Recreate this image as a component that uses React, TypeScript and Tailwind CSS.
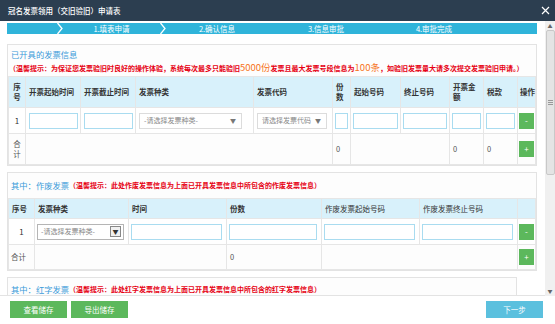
import React from 'react';

const cell = 'border border-[#e6e6e6] align-middle';
const inputCls = 'block h-[16px] w-full border border-[#a9dcf0] bg-white';

const GreenBtn = ({ label }: { label: string }) => (
  <div className="mx-auto flex h-[16px] w-[15px] items-center justify-center bg-[#5cb85c] text-[8px] leading-none text-white">
    {label}
  </div>
);

const FakeSelect = ({ text }: { text: string }) => (
  <div className="flex h-[16px] w-full items-center justify-between border border-[#dcdcdc] bg-white pl-[4px] pr-[5px]">
    <span className="text-[7px] text-[#888]">{text}</span>
    <span className="text-[6px] text-[#777]">▼</span>
  </div>
);

const WinSelect = ({ text }: { text: string }) => (
  <div className="flex h-[16px] w-full items-center justify-between border border-[#b5b5b5] bg-white pl-[3px] pr-[2px]">
    <span className="text-[7px] text-[#888]">{text}</span>
    <span className="flex h-[11px] w-[11px] items-center justify-center border border-[#888] bg-[#f0f0f0] text-[6px] text-[#333]">▼</span>
  </div>
);

const Hint = ({ children }: { children: React.ReactNode }) => (
  <span className="whitespace-nowrap text-[7px] font-bold text-[#e60012]">{children}</span>
);

const Chevron = () => (
  <svg className="absolute -left-[3px] top-0" width="6" height="11" viewBox="0 0 6 11">
    <polyline points="0.5,0 5,5.5 0.5,11" fill="none" stroke="#ffffff" strokeWidth="1.3" />
  </svg>
);

const App = () => {
  return (
    <div className="relative h-[324px] w-[555px] overflow-hidden bg-white font-['Noto_Sans_CJK_SC',sans-serif] text-[#333]">
      {/* title bar */}
      <div className="flex h-[21px] items-center justify-between bg-[#2c3e50] pl-[8px] pr-[5px]">
        <span className="text-[7.5px] font-medium text-white">冠名发票领用（交旧验旧）申请表</span>
        <svg width="9" height="9" viewBox="0 0 9 9">
          <path d="M1 1 L8 8 M8 1 L1 8" stroke="#ffffff" strokeWidth="1.2" />
        </svg>
      </div>

      <div className="flex">
        {/* scrolling content */}
        <div className="h-[275px] w-[545px] overflow-hidden border-b border-[#e3e3e3] pl-[7px] pr-[8px] pt-[2px]">
          {/* steps */}
          <div className="flex h-[11px] bg-[#2fb4da] text-[7.5px] leading-[11px] text-white">
            <div className="w-[53px]" />
            <div className="relative w-[103px] text-center">
              <Chevron />
              1.填表申请
            </div>
            <div className="relative w-[108px] text-center">
              <Chevron />
              2.确认信息
            </div>
            <div className="w-[110px] text-center">3.信息审批</div>
            <div className="w-[106px] text-center">4.审批完成</div>
            <div className="flex-1" />
          </div>

          {/* issued invoices */}
          <div className="mt-[10px] border border-[#e3e3e3] bg-[#fdfdfd]">
            <div className="box-content h-[11px] pl-[3px] pt-[4px] text-[8.3px] leading-[11px] text-[#3a9ad9]">
              已开具的发票信息
            </div>
            <div className="h-[9px] pl-[1px] leading-[9px]">
              <Hint>
                （温馨提示：为保证您发票验旧时良好的操作体验，系统每次最多只能验旧
                <span className="text-[9.5px] font-normal text-[#f7741c]">5000份</span>
                发票且最大发票号段信息为
                <span className="text-[9.5px] font-normal text-[#f7741c]">100条</span>
                ，如验旧发票量大请多次提交发票验旧申请。）
              </Hint>
            </div>
            <table className="mt-[7px] w-full table-fixed border-collapse text-[7.5px]">
              <colgroup>
                <col className="w-[17px]" />
                <col className="w-[55px]" />
                <col className="w-[55px]" />
                <col className="w-[118px]" />
                <col className="w-[79px]" />
                <col className="w-[18px]" />
                <col className="w-[50px]" />
                <col className="w-[49px]" />
                <col className="w-[34px]" />
                <col className="w-[34px]" />
                <col />
              </colgroup>
              <thead>
                <tr className="h-[31px] bg-[#d8f1fb] font-bold leading-[10px]">
                  <th className={`${cell} text-center`}>序<br />号</th>
                  <th className={`${cell} pl-[3px] text-left`}>开票起始时间</th>
                  <th className={`${cell} pl-[3px] text-left`}>开票截止时间</th>
                  <th className={`${cell} pl-[3px] text-left`}>发票种类</th>
                  <th className={`${cell} pl-[3px] text-left`}>发票代码</th>
                  <th className={`${cell} pl-[3px] text-left`}>份<br />数</th>
                  <th className={`${cell} pl-[3px] text-left`}>起始号码</th>
                  <th className={`${cell} pl-[3px] text-left`}>终止号码</th>
                  <th className={`${cell} pl-[3px] text-left`}>开票金<br />额</th>
                  <th className={`${cell} pl-[3px] text-left`}>税款</th>
                  <th className={`${cell} pl-[2px] text-left`}>操作</th>
                </tr>
              </thead>
              <tbody>
                <tr className="h-[26px] bg-white">
                  <td className={`${cell} text-center text-[8px]`}>1</td>
                  <td className={`${cell} pl-[3px] pr-[2px]`}><div className={inputCls} /></td>
                  <td className={`${cell} pl-[3px] pr-[2px]`}><div className={inputCls} /></td>
                  <td className={`${cell} pl-[3px] pr-[11px]`}><FakeSelect text="-请选择发票种类-" /></td>
                  <td className={`${cell} pl-[3px] pr-[5px]`}><FakeSelect text="请选择发票代码" /></td>
                  <td className={`${cell} px-[2px]`}><div className={inputCls} /></td>
                  <td className={`${cell} px-[2px]`}><div className={inputCls} /></td>
                  <td className={`${cell} px-[2px]`}><div className={inputCls} /></td>
                  <td className={`${cell} px-[2px]`}><div className={inputCls} /></td>
                  <td className={`${cell} px-[2px]`}><div className={inputCls} /></td>
                  <td className={cell}><GreenBtn label="-" /></td>
                </tr>
                <tr className="h-[31px] bg-[#fdfdfd] text-[#555]">
                  <td className={`${cell} text-center leading-[10px]`}>合<br />计</td>
                  <td className={cell} colSpan={4} />
                  <td className={`${cell} pl-[3px]`}>0</td>
                  <td className={cell} colSpan={2} />
                  <td className={`${cell} pl-[3px]`}>0</td>
                  <td className={`${cell} pl-[3px]`}>0</td>
                  <td className={cell}><GreenBtn label="+" /></td>
                </tr>
              </tbody>
            </table>
          </div>

          {/* voided invoices */}
          <div className="mt-[6px] border border-[#e3e3e3] bg-[#fdfdfd]">
            <div className="mt-[6px] flex h-[12px] items-center pl-[3px]">
              <span className="text-[8.3px] text-[#3a9ad9]">其中：作废发票</span>
              <Hint>（温馨提示：此处作废发票信息为上面已开具发票信息中所包含的作废发票信息）</Hint>
            </div>
            <table className="mt-[7px] w-full table-fixed border-collapse text-[7.5px]">
              <colgroup>
                <col className="w-[26px]" />
                <col className="w-[94px]" />
                <col className="w-[98px]" />
                <col className="w-[95px]" />
                <col className="w-[98px]" />
                <col className="w-[98px]" />
                <col />
              </colgroup>
              <thead>
                <tr className="h-[20px] bg-[#d8f1fb] font-bold">
                  <th className={`${cell} pl-[3px] text-left`}>序号</th>
                  <th className={`${cell} pl-[3px] text-left`}>发票种类</th>
                  <th className={`${cell} pl-[3px] text-left`}>时间</th>
                  <th className={`${cell} pl-[3px] text-left`}>份数</th>
                  <th className={`${cell} pl-[3px] text-left font-normal`}>作废发票起始号码</th>
                  <th className={`${cell} pl-[3px] text-left font-normal`}>作废发票终止号码</th>
                  <th className={cell} />
                </tr>
              </thead>
              <tbody>
                <tr className="h-[26px] bg-white">
                  <td className={`${cell} text-center text-[8px]`}>1</td>
                  <td className={`${cell} pl-[2px] pr-[4px]`}><WinSelect text="-请选择发票种类-" /></td>
                  <td className={`${cell} pl-[2px] pr-[4px]`}><div className={inputCls} /></td>
                  <td className={`${cell} pl-[2px] pr-[4px]`}><div className={inputCls} /></td>
                  <td className={`${cell} pl-[2px] pr-[4px]`}><div className={inputCls} /></td>
                  <td className={`${cell} pl-[2px] pr-[4px]`}><div className={inputCls} /></td>
                  <td className={cell}><GreenBtn label="-" /></td>
                </tr>
                <tr className="h-[25px] bg-[#fdfdfd] text-[#555]">
                  <td className={`${cell} pl-[2px]`}>合计</td>
                  <td className={cell} colSpan={2} />
                  <td className={`${cell} pl-[3px]`}>0</td>
                  <td className={cell} colSpan={2} />
                  <td className={cell}><GreenBtn label="+" /></td>
                </tr>
              </tbody>
            </table>
          </div>

          {/* red-letter invoices */}
          <div className="mt-[6px] h-[30px] w-[510px] border border-[#e3e3e3] bg-[#fdfdfd]">
            <div className="mt-[5px] flex h-[12px] items-center pl-[3px]">
              <span className="text-[8.3px] text-[#3a9ad9]">其中：红字发票</span>
              <Hint>（温馨提示：此处红字发票信息为上面已开具发票信息中所包含的红字发票信息）</Hint>
            </div>
          </div>
        </div>

        {/* scrollbar */}
        <div className="flex h-[275px] w-[10px] flex-col items-center bg-[#f0f0f0]">
          <span className="mt-[1px] text-[5px] leading-[8px] text-[#666]">▲</span>
          <div className="flex h-[145px] w-[9px] items-center justify-center rounded-[2px] border border-[#c8c8c8] bg-[#e4e4e4]">
            <div className="flex flex-col gap-[1px]">
              <div className="h-px w-[5px] bg-[#999]" />
              <div className="h-px w-[5px] bg-[#999]" />
              <div className="h-px w-[5px] bg-[#999]" />
            </div>
          </div>
          <div className="flex-1" />
          <span className="mb-[1px] text-[5px] leading-[8px] text-[#666]">▼</span>
        </div>
      </div>

      {/* footer */}
      <div className="flex items-start justify-between pl-[10px] pr-[12px] pt-[5px]">
        <div className="flex gap-[4px]">
          <div className="flex h-[17px] w-[57px] items-center justify-center bg-[#5cb85c] text-[7.5px] text-white">查看储存</div>
          <div className="flex h-[17px] w-[57px] items-center justify-center bg-[#5cb85c] text-[7.5px] text-white">导出储存</div>
        </div>
        <div className="flex h-[17px] w-[57px] items-center justify-center bg-[#5bc0de] text-[7.5px] text-white">下一步</div>
      </div>
    </div>
  );
};

export default App;
